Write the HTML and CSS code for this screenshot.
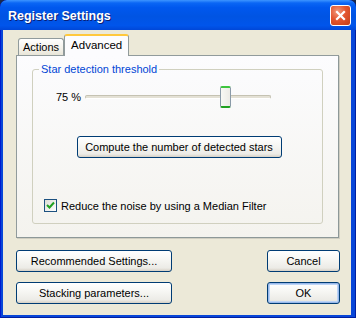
FILE: index.html
```html
<!DOCTYPE html>
<html lang="en">
<head>
  <meta charset="UTF-8">
  <title>Register Settings</title>
  <link rel="stylesheet" href="styles.css">
</head>
<body>
  <div class="window">
    <div class="titlebar">
      <span class="title">Register Settings</span>
      <div class="close-btn">
        <svg width="11" height="11" viewBox="0 0 11 11">
          <path d="M2 2 L9 9 M9 2 L2 9" stroke="white" stroke-width="2.2" stroke-linecap="square"/>
        </svg>
      </div>
    </div>

    <div class="client">
      <div class="tabs">
        <div class="tab">Actions</div>
        <div class="tab selected">Advanced</div>
      </div>

      <div class="tab-panel">
        <div class="group">
          <div class="legend">Star detection threshold</div>

          <div class="slider-row">
            <span class="slider-label">75 %</span>
            <div class="slider">
              <div class="track"></div>
              <div class="thumb" style="left: 135px;"></div>
            </div>
          </div>

          <div class="compute-row">
            <button class="btn compute">Compute the number of detected stars</button>
          </div>

          <label class="check-row">
            <span class="checkbox">
              <svg width="9" height="9" viewBox="0 0 9 9">
                <path d="M1 4 L3.5 6.5 L8 1.5" fill="none" stroke="#21a121" stroke-width="2"/>
              </svg>
            </span>
            Reduce the noise by using a Median Filter
          </label>
        </div>
      </div>

      <div class="footer">
        <div class="footer-row">
          <button class="btn wide">Recommended Settings...</button>
          <button class="btn narrow">Cancel</button>
        </div>
        <div class="footer-row">
          <button class="btn wide">Stacking parameters...</button>
          <button class="btn narrow default">OK</button>
        </div>
      </div>
    </div>
  </div>
</body>
</html>
```

FILE: styles.css
```css
html, body {
  margin: 0;
  padding: 0;
  background: #1b2a4a;
}
body {
  font-family: "Liberation Sans", Arial, sans-serif;
  font-size: 11px;
  color: black;
}
.window {
  width: 356px;
  height: 318px;
  display: flex;
  flex-direction: column;
  background: #0846d8;
  border-radius: 7px 7px 0 0;
  box-shadow: inset 1px 0 0 #0019cf, inset -1px 0 0 #001ea0, inset 0 -1px 0 #001ea0;
  box-sizing: border-box;
  overflow: hidden;
}
.titlebar {
  height: 30px;
  flex: none;
  display: flex;
  align-items: center;
  justify-content: space-between;
  padding: 0 5px 0 8px;
  background: linear-gradient(to bottom, #3d95ff 0%, #0a66f5 10%, #0058ee 25%, #0054e3 55%, #0055eb 85%, #0047d8 100%);
  border-radius: 7px 7px 0 0;
}
.title {
  color: white;
  font-weight: bold;
  font-size: 12.5px;
  text-shadow: 1px 1px 0 #0a1e73;
  margin-top: 1px;
}
.close-btn {
  width: 19px;
  height: 19px;
  border: 1px solid white;
  border-radius: 3px;
  background: radial-gradient(circle at 35% 30%, #f19a7d 0%, #e3562f 45%, #c33d15 100%);
  display: flex;
  align-items: center;
  justify-content: center;
  margin-top: 1px;
}
.client {
  flex: 1;
  margin: 0 5px 3px 3px;
  background: #ece9d8;
  padding: 4px 12px 0 13px;
  display: flex;
  flex-direction: column;
}
.tabs {
  display: flex;
  align-items: flex-end;
  height: 21px;
  padding-left: 2px;
  position: relative;
  z-index: 1;
}
.tab {
  height: 17px;
  padding: 0 4px;
  border: 1px solid #919b9c;
  border-bottom: none;
  border-radius: 3px 3px 0 0;
  background: linear-gradient(to bottom, #ffffff, #f1efe6 70%, #e8e5d8);
  display: flex;
  align-items: center;
  box-sizing: border-box;
  font-size: 11px;
}
.tab.selected {
  height: 22px;
  padding: 0 6px 2px;
  margin-bottom: -1px;
  background: #fcfcfe;
  border-top: 2px solid #ffc83c;
  font-size: 11.5px;
}
.tab-panel {
  height: 183px;
  border: 1px solid #919b9c;
  border-right-color: #8d9898;
  border-bottom-color: #8d9898;
  background: linear-gradient(to bottom, #fcfcfe, #f4f3ee);
  box-shadow: 1px 1px 0 #d0cec1;
  padding: 13px 15px 13px 15px;
  box-sizing: border-box;
}
.group {
  height: 100%;
  border: 1px solid #d0d0bf;
  border-radius: 3px;
  position: relative;
  box-sizing: border-box;
  padding: 16px 10px 0 11px;
}
.legend {
  position: absolute;
  top: -7px;
  left: 6px;
  padding: 0 2px;
  background: #fbfbfd;
  color: #0046d5;
  font-size: 11px;
}
.slider-row {
  display: flex;
  align-items: center;
  height: 22px;
  padding-left: 12px;
}
.slider-label {
  width: 29px;
  font-size: 11px;
}
.slider {
  position: relative;
  width: 186px;
  height: 22px;
}
.track {
  position: absolute;
  left: 0;
  right: 0;
  top: 9px;
  height: 2px;
  border: 1px solid #c5c2b2;
  border-bottom-color: #fff;
  border-radius: 2px;
  background: #e4e1d5;
}
.thumb {
  position: absolute;
  top: 0;
  width: 9px;
  height: 18px;
  border: 1px solid #8a9aa8;
  border-top: 2px solid #3fc53f;
  border-bottom: 2px solid #21a121;
  border-radius: 2px;
  background: linear-gradient(to right, #f8f8f4, #ecebe6);
}
.compute-row {
  display: flex;
  justify-content: center;
  margin-top: 28px;
  padding-left: 2px;
}
.btn {
  font-family: "Liberation Sans", Arial, sans-serif;
  font-size: 11px;
  color: black;
  height: 22px;
  border: 1px solid #003c74;
  border-radius: 3px;
  background: linear-gradient(to bottom, #ffffff 0%, #f7f7f4 40%, #ecebe6 85%, #d6d0c5 100%);
  box-sizing: border-box;
  padding: 0;
}
.compute {
  width: 205px;
}
.check-row {
  display: flex;
  align-items: center;
  gap: 4px;
  margin-top: 41px;
  font-size: 11px;
}
.checkbox {
  width: 13px;
  height: 13px;
  border: 1px solid #1c5180;
  background: linear-gradient(135deg, #dcdcd6, #ffffff);
  box-sizing: border-box;
  display: flex;
  align-items: center;
  justify-content: center;
}
.footer {
  display: flex;
  flex-direction: column;
  gap: 10px;
  margin-top: 12px;
}
.footer-row {
  display: flex;
  justify-content: space-between;
}
.wide {
  width: 156px;
}
.narrow {
  width: 73px;
  margin-right: -1px;
}
.default {
  box-shadow: inset 0 0 0 1px #98b8ea, inset 0 0 0 2px #bcd4f6;
}
```
